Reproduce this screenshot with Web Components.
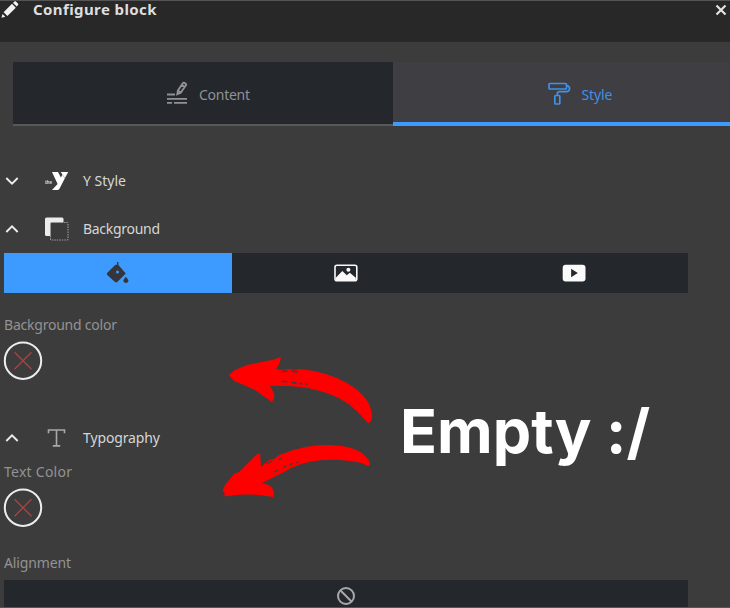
<!DOCTYPE html>
<html lang="en">
<head>
<meta charset="utf-8">
<title>Configure block</title>
<style>
html,body{margin:0;height:608px;overflow:hidden;background:#3c3c3c}
body{font-family:"Noto Sans","Open Sans",sans-serif;font-size:14px;color:#d6d6d6}
</style>
</head>
<body>
<block-panel></block-panel>
<script>
const define = (name, css, html, ready) => customElements.define(name, class extends HTMLElement {
  connectedCallback() {
    if (this.shadowRoot) return;
    const root = this.attachShadow({ mode: 'open' });
    root.innerHTML = `<style>:host{box-sizing:border-box}${css}</style>${html}`;
    if (ready) ready.call(this, root);
  }
});

const icons = {
  pencil: [20, 20, '<path fill="#f2f2f2" d="M1.500 17.700l1-3.600 2.800 2.700zM3.600 12.200L12 3.800l3.800 3.900-8.400 8.300zM13 2.900l1.400-1.300c.6-.5 1.300-.4 1.800.1l1.800 1.900c.5.5.4 1.100-.1 1.600L16.700 6.600z"/>'],
  close: [12, 12, '<path d="M1.500 1.500l9 9M10.500 1.500l-9 9" stroke="#e2e2e2" stroke-width="2.200"/>'],
  content: [22, 24, '<g fill="none" stroke="#8f9195"><path stroke-width="1.900" d="M1 13.500h8M1 17.900h20M1 21.900h5M8 21.900h13"/><path stroke-width="1.900" d="M11.300 13.200l.6-3.600 4.900-7.400c.5-.7 1-.7 1.600-.3l1.300.9c.6.4.6.9.2 1.500l-5.200 7.400zM12.200 9.700l2.200 1.500M15.800 4l2.800 1.900"/></g>'],
  roller: [23, 23, '<g fill="none" stroke="#3f91ea" stroke-width="1.700"><rect x="1" y="1.500" width="17.500" height="5.500" rx="1"/><path d="M18.500 3.800h1.200c3 1.400 2.200 5.800-1 5.800h-7c-1.800 0-2.300.8-2.300 2v2"/><rect x="6.800" y="13.500" width="5" height="8.500" rx=".8"/></g>'],
  down: [14, 10, '<path d="M1.300 2l5.700 5.600L12.700 2" fill="none" stroke="#ededed" stroke-width="1.900"/>'],
  up: [14, 10, '<path d="M1.300 8L7 2.400 12.700 8" fill="none" stroke="#ededed" stroke-width="1.900"/>'],
  ymca: [24, 20, '<path fill="#fff" d="M7 1h6l2.900 5.600L18.900 1h4.200L14.600 17.500q-.8 1.500-2.400 1.500H7l5.600-6z"/><path fill="#a5a5a5" d="M15.600 1h7.700l-3.600 6.500z"/><path fill="#fff" d="M16 1h7l-3.300 5.500z"/><text x="0" y="12.800" font-family="Noto Sans" font-weight="bold" font-size="5" textLength="7" lengthAdjust="spacingAndGlyphs" fill="#ddd">the</text>'],
  layers: [26, 26, '<rect x="1" y="1.500" width="18.500" height="18.500" rx="1.500" fill="#ececec"/><rect x="6.500" y="6.500" width="17.500" height="17.500" rx="1" fill="#3a3a3a" stroke="#999" stroke-width="1.100" stroke-dasharray="1.500 1"/>'],
  type: [20, 20, '<path d="M1.500 5.300V2h16v3.300M9.500 2v15.800M5.800 17.900h7.400" fill="none" stroke="#a9a9a9" stroke-width="1.600"/>'],
  bucket: [24, 24, '<path fill="#35353a" d="M11 1h1.400v3.100l7.400 8.500-8.300 8.200q-1.400 1.200-2.800 0L1.300 14q-.9-1.200 0-2.300L8.900 4.200 11 3.400z"/><circle cx="11.500" cy="11" r="1.500" fill="#3d9bff"/><path fill="#35353a" d="M19.800 15.800q-2.800 3.200-2.400 4.200a2.600 2.600 0 0 0 5 0q.3-1-2.600-4.200z"/>'],
  image: [24, 18, '<rect x="1" y="1.200" width="21.800" height="15.500" rx="2" fill="#24272c" stroke="#fafafa" stroke-width="1.600"/><path d="M2 13.500l6.300-6.600 4.500 4.400 3-2.500 6 4.900v2.500h-19.800z" fill="#fafafa"/><circle cx="14.400" cy="5.700" r="2" fill="#fafafa"/>'],
  video: [24, 18, '<rect x=".7" y=".7" width="22.800" height="16.800" rx="3" fill="#fafafa"/><path d="M9.100 4.800v8.400l6.700-4.200z" fill="#24272c"/>'],
  none: [20, 20, '<g fill="none" stroke="#a7a8ab" stroke-width="2"><circle cx="10" cy="10" r="8"/><path d="M4.300 4.300l11.400 11.400"/></g>']
};
define('ui-icon', ':host{display:inline-flex;flex:none}svg{display:block}', '', function (root) {
  const [w, h, body] = icons[this.getAttribute('name')];
  root.innerHTML += `<svg width="${w}" height="${h}" viewBox="0 0 ${w} ${h}">${body}</svg>`;
});

/* Tracks its text out or in so that it fills the width given in "w". */
define('fit-text', ':host{display:inline-block;white-space:pre;line-height:20px}', '<span><slot></slot></span>', function (root) {
  const span = root.querySelector('span');
  const n = this.textContent.length;
  const gap = (Number(this.getAttribute('w')) - span.getBoundingClientRect().width) / (n - 1);
  this.style.letterSpacing = gap.toFixed(3) + 'px';
  this.style.marginRight = (-gap).toFixed(3) + 'px';
});

define('panel-header', ':host{display:flex;align-items:flex-start;height:42px;background:#282828;border-top:1px solid #555;padding-right:3px}.p{margin:-1px 0 0 0}.t{font-weight:700;font-size:15px;color:#dedede;margin:-2px 0 0 13px}.x{margin:3px 0 0 auto}',
  '<ui-icon class="p" name="pencil"></ui-icon><fit-text class="t" w="123.500">Configure block</fit-text><ui-icon class="x" name="close"></ui-icon>');

define('style-tab', `:host{display:flex;align-items:center;justify-content:center;height:64px;background:#24272c;color:#8f9195;border-bottom:2px solid #55595c;flex:none;width:380px;padding:4px 0 0 10px}
:host([active]){background:#3e3e43;color:#4190e6;border-bottom:4px solid #3d9bff;padding:6px 6px 0 0}slot[name=icon]{display:block;margin-right:11px}`,
  '<slot name="icon"></slot><slot></slot>');

define('section-row', ':host{display:flex;align-items:center;height:28px;padding-left:5px}.i{width:26px;display:flex;justify-content:center;margin:0 13px 0 25px}', '', function (root) {
  root.innerHTML += `<ui-icon name="${this.getAttribute('arrow')}"></ui-icon><div class="i"><ui-icon name="${this.getAttribute('icon')}"></ui-icon></div><slot></slot>`;
});

define('segment-bar', ':host{display:flex;width:684px;height:40px;margin-left:4px;background:#24272c}::slotted(*){flex:1;align-items:center;justify-content:center}::slotted([on]){background:#3d9bff}', '<slot></slot>');

define('color-field', ':host{display:block;padding-left:4px;color:#939393}svg{display:block;margin:6px 0 0 -1px}',
  `<slot></slot><svg width="40" height="40" viewBox="0 0 40 40"><circle cx="20" cy="19.700" r="18.200" fill="none" stroke="#ededed" stroke-width="2"/><path d="M11.500 11.200l17 17M28.500 11.200l-17 17" stroke="#a94444" stroke-width="1.300"/></svg>`);

define('brush-note', ':host{position:absolute;left:0;top:0;width:730px;height:608px;pointer-events:none}svg{position:absolute;inset:0}.e{position:absolute;left:400px;top:385px;white-space:pre;font:700 61px/92px Inter,sans-serif;color:#fff}',
  `<svg width="730" height="608" viewBox="0 0 730 608"><g fill="#f00">
  <path d="M229 375l6-5 12-5 5-1 20-4 9-3q-1 7-5 12l5 1 8-1 6 1 5-1 14 2q25 5 42 18 16 13 16 28-1 6-4 6-5-5-11-12-17-16-41-21-19-5-46-4l4 7q1 6-2 9-7-5-17-12l-11-5-10-4z"/>
  <path d="M222.500 491L225 485 234 474 239 472 248 463 256 455 260 453 261 467 269 460 274 459 279 455 285 453Q306 444.500 330 445 356 446 365 456 371 461 369.500 465.500 367 466.500 363 463.500 346 459 322 460 299 462 282 473L262 483Q274 485 274 494L273 497Q254 493 232 495.500L226 496.500Q223 495 225 493z"/></g>
  <g fill="none" stroke="#3c3c3c" stroke-width="1.300" stroke-linecap="round"><path d="M282 371.500l5-.5M292 371l5 1M282 381.500l5 .2M292 382.500l4 .5M300 383.500l2 .5M306 384l1 .2"/><path d="M267 463.500l5-2.500M279 459.500l2-1M274 472l4-2M283 467.500l3-1.500M290 464.500l3-1M297 462.500l1-.5"/></g></svg>
  <span class="e">Empty :/</span>`);

define('block-panel', `:host{display:block;position:relative;height:608px;width:730px;overflow:hidden;background:#3c3c3c}
.tabs{display:flex;padding:20px 0 0 13px;margin-bottom:41px}.first{margin-bottom:20px}.seg{margin:10px 0 22px 4px}.b{margin-bottom:43px}.txt{margin:10px 0 0}.lab{padding:25px 0 0 4px;height:20px;color:#939393}.last{height:27px;margin-top:7px;padding-top:5px;box-sizing:border-box}.foot{height:1px;background:#555}`,
`<panel-header></panel-header>
<div class="tabs"><style-tab><ui-icon slot="icon" name="content"></ui-icon><fit-text w="51">Content</fit-text></style-tab><style-tab active><ui-icon slot="icon" name="roller"></ui-icon><fit-text w="31">Style</fit-text></style-tab></div>
<section-row class="first" arrow="down" icon="ymca"><fit-text w="43">Y Style</fit-text></section-row>
<section-row arrow="up" icon="layers"><fit-text w="77">Background</fit-text></section-row>
<segment-bar class="seg"><ui-icon on name="bucket"></ui-icon><ui-icon name="image"></ui-icon><ui-icon name="video"></ui-icon></segment-bar>
<color-field class="b"><fit-text w="113">Background color</fit-text></color-field>
<section-row arrow="up" icon="type"><fit-text w="77">Typography</fit-text></section-row>
<color-field class="txt"><fit-text w="68">Text Color</fit-text></color-field>
<div class="lab"><fit-text w="67">Alignment</fit-text></div>
<segment-bar class="last"><ui-icon name="none"></ui-icon></segment-bar><div class="foot"></div>
<brush-note></brush-note>`);
</script>
</body>
</html>
